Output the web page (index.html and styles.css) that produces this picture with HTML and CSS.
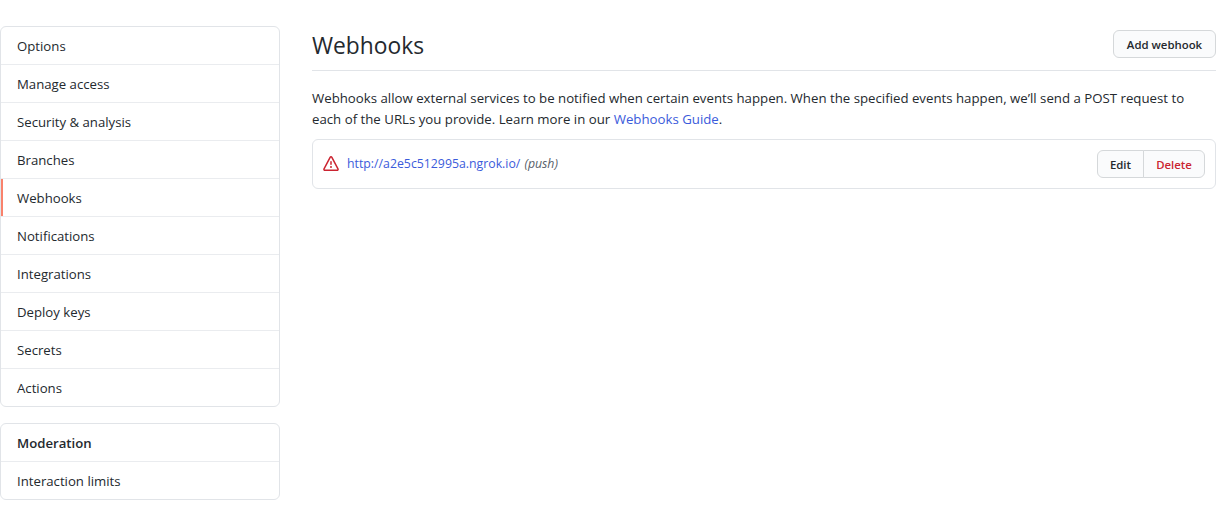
FILE: index.html
```html
<!DOCTYPE html>
<html lang="en">
<head>
<meta charset="utf-8">
<title>Webhooks</title>
<link rel="stylesheet" href="styles.css">
</head>
<body>
<div class="layout">
  <aside class="sidebar">
    <nav class="menu">
      <a class="menu-item">Options</a>
      <a class="menu-item">Manage access</a>
      <a class="menu-item">Security &amp; analysis</a>
      <a class="menu-item">Branches</a>
      <a class="menu-item selected">Webhooks</a>
      <a class="menu-item">Notifications</a>
      <a class="menu-item">Integrations</a>
      <a class="menu-item">Deploy keys</a>
      <a class="menu-item">Secrets</a>
      <a class="menu-item">Actions</a>
    </nav>
    <nav class="menu">
      <h3 class="menu-heading">Moderation</h3>
      <a class="menu-item">Interaction limits</a>
    </nav>
  </aside>
  <main class="content">
    <header class="subhead">
      <h2 class="subhead-title">Webhooks</h2>
      <a class="btn btn-add">Add webhook</a>
    </header>
    <p class="intro">Webhooks allow external services to be notified when certain events happen. When the specified events happen, we’ll send a POST request to each of the URLs you provide. Learn more in our <a class="link">Webhooks Guide</a>.</p>
    <div class="hook-box">
      <div class="hook-info">
        <svg class="alert-icon" viewBox="0 0 16 16" width="16" height="16" aria-hidden="true"><path fill-rule="evenodd" d="M8.22 1.754a.25.25 0 00-.44 0L1.698 13.132a.25.25 0 00.22.368h12.164a.25.25 0 00.22-.368L8.22 1.754zm-1.763-.707c.659-1.234 2.427-1.234 3.086 0l6.082 11.378A1.75 1.75 0 0114.082 15H1.918a1.75 1.75 0 01-1.543-2.575L6.457 1.047zM9 11a1 1 0 11-2 0 1 1 0 012 0zm-.25-5.25a.75.75 0 00-1.5 0v2.5a.75.75 0 001.5 0v-2.5z"></path></svg>
        <a class="link hook-url">http://a2e5c512995a.ngrok.io/</a>
        <em class="hook-events">(push)</em>
      </div>
      <div class="btn-group">
        <a class="btn btn-edit">Edit</a>
        <a class="btn btn-delete">Delete</a>
      </div>
    </div>
  </main>
</div>
</body>
</html>
```
FILE: styles.css
```css
* { box-sizing: border-box; }
body {
  margin: 0;
  background: #fff;
  color: #24292e;
  font-family: "Open Sans", "Noto Sans", sans-serif;
  font-size: 13.24px;
  line-height: 21px;
}
.layout {
  display: flex;
  gap: 32px;
  padding: 26px 7px 0 0;
}
.sidebar {
  width: 280px;
  flex: none;
  display: flex;
  flex-direction: column;
  gap: 16px;
}
.menu {
  display: flex;
  flex-direction: column;
  border: 1px solid #e1e4e8;
  border-radius: 6px;
  background: #fff;
  overflow: hidden;
}
.menu-item, .menu-heading {
  display: block;
  height: 38px;
  margin: 0;
  padding: 9px 16px 7px;
  border-bottom: 1px solid #eaecef;
  font-size: 13.2px;
  line-height: 21px;
}
.menu-item:last-child { border-bottom: 0; height: 37px; }
.menu-heading { font-weight: 600; }
.selected { box-shadow: inset 2px 0 0 #f9826c; }
.content { flex: 1; min-width: 0; }
.subhead {
  display: flex;
  align-items: center;
  justify-content: space-between;
  height: 45px;
  padding-bottom: 8px;
  border-bottom: 1px solid #e1e4e8;
  margin-bottom: 17px;
}
.subhead-title {
  margin: 4px 0 0;
  font-size: 22.8px;
  font-weight: 400;
  line-height: 36px;
}
.btn {
  display: block;
  height: 28px;
  font-size: 11.4px;
  font-weight: 600;
  line-height: 18px;
  padding: 5px 0 3px;
  text-align: center;
  background: #fafbfc;
  border: 1px solid #d5d8da;
}
.btn-add { border-radius: 6px; width: 103px; }
.intro { margin: 0 0 9px; }
.link { color: #3b5bdb; }
.hook-box {
  display: flex;
  align-items: center;
  justify-content: space-between;
  height: 50px;
  padding: 0 10px;
  border: 1px solid #e1e4e8;
  border-radius: 6px;
}
.hook-info { display: flex; align-items: center; font-size: 12.3px; line-height: 18px; }
.alert-icon { color: #cb2431; fill: currentColor; margin-right: 8px; }
.hook-events { color: #586069; margin-left: 4px; }
.btn-group { display: flex; }
.btn-edit { border-radius: 6px 0 0 6px; width: 47px; }
.btn-delete { border-radius: 0 6px 6px 0; margin-left: -1px; width: 62px; color: #cb2431; }
```
